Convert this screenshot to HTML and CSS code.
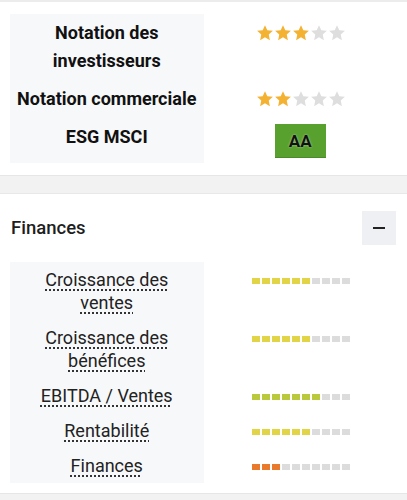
FILE: index.html
```html
<!DOCTYPE html>
<html lang="fr">
<head>
<meta charset="utf-8">
<link rel="stylesheet" href="styles.css">
</head>
<body>
<div class="topline"></div>
<section class="card card-ratings">
  <div class="grid grid-bold">
    <div class="label">Notation des investisseurs</div>
    <div class="value"><div class="stars">
      <svg class="star on" viewBox="0 0 24 24"><polygon points="12,1.5 15.1,8.3 22.5,9.1 17,14.1 18.5,21.5 12,17.8 5.5,21.5 7,14.1 1.5,9.1 8.9,8.3"/></svg>
      <svg class="star on" viewBox="0 0 24 24"><polygon points="12,1.5 15.1,8.3 22.5,9.1 17,14.1 18.5,21.5 12,17.8 5.5,21.5 7,14.1 1.5,9.1 8.9,8.3"/></svg>
      <svg class="star on" viewBox="0 0 24 24"><polygon points="12,1.5 15.1,8.3 22.5,9.1 17,14.1 18.5,21.5 12,17.8 5.5,21.5 7,14.1 1.5,9.1 8.9,8.3"/></svg>
      <svg class="star" viewBox="0 0 24 24"><polygon points="12,1.5 15.1,8.3 22.5,9.1 17,14.1 18.5,21.5 12,17.8 5.5,21.5 7,14.1 1.5,9.1 8.9,8.3"/></svg>
      <svg class="star" viewBox="0 0 24 24"><polygon points="12,1.5 15.1,8.3 22.5,9.1 17,14.1 18.5,21.5 12,17.8 5.5,21.5 7,14.1 1.5,9.1 8.9,8.3"/></svg>
    </div></div>
    <div class="label">Notation commerciale</div>
    <div class="value"><div class="stars">
      <svg class="star on" viewBox="0 0 24 24"><polygon points="12,1.5 15.1,8.3 22.5,9.1 17,14.1 18.5,21.5 12,17.8 5.5,21.5 7,14.1 1.5,9.1 8.9,8.3"/></svg>
      <svg class="star on" viewBox="0 0 24 24"><polygon points="12,1.5 15.1,8.3 22.5,9.1 17,14.1 18.5,21.5 12,17.8 5.5,21.5 7,14.1 1.5,9.1 8.9,8.3"/></svg>
      <svg class="star" viewBox="0 0 24 24"><polygon points="12,1.5 15.1,8.3 22.5,9.1 17,14.1 18.5,21.5 12,17.8 5.5,21.5 7,14.1 1.5,9.1 8.9,8.3"/></svg>
      <svg class="star" viewBox="0 0 24 24"><polygon points="12,1.5 15.1,8.3 22.5,9.1 17,14.1 18.5,21.5 12,17.8 5.5,21.5 7,14.1 1.5,9.1 8.9,8.3"/></svg>
      <svg class="star" viewBox="0 0 24 24"><polygon points="12,1.5 15.1,8.3 22.5,9.1 17,14.1 18.5,21.5 12,17.8 5.5,21.5 7,14.1 1.5,9.1 8.9,8.3"/></svg>
    </div></div>
    <div class="label">ESG MSCI</div>
    <div class="value"><span class="badge">AA</span></div>
  </div>
</section>
<div class="band"></div>
<section class="card card-fin">
  <div class="head">
    <h2 class="title">Finances</h2>
    <button class="toggle" aria-label="Réduire"><span class="minus"></span></button>
  </div>
  <div class="grid grid-reg">
    <div class="label"><span class="dotted">Croissance des ventes</span></div>
    <div class="value"><div class="bar y"><i class="f"></i><i class="f"></i><i class="f"></i><i class="f"></i><i class="f"></i><i class="f"></i><i></i><i></i><i></i><i></i></div></div>
    <div class="label"><span class="dotted">Croissance des bénéfices</span></div>
    <div class="value"><div class="bar y"><i class="f"></i><i class="f"></i><i class="f"></i><i class="f"></i><i class="f"></i><i class="f"></i><i></i><i></i><i></i><i></i></div></div>
    <div class="label"><span class="dotted">EBITDA / Ventes</span></div>
    <div class="value"><div class="bar g"><i class="f"></i><i class="f"></i><i class="f"></i><i class="f"></i><i class="f"></i><i class="f"></i><i class="f"></i><i></i><i></i><i></i></div></div>
    <div class="label"><span class="dotted">Rentabilité</span></div>
    <div class="value"><div class="bar y"><i class="f"></i><i class="f"></i><i class="f"></i><i class="f"></i><i class="f"></i><i class="f"></i><i></i><i></i><i></i><i></i></div></div>
    <div class="label"><span class="dotted">Finances</span></div>
    <div class="value"><div class="bar o"><i class="f"></i><i class="f"></i><i class="f"></i><i></i><i></i><i></i><i></i><i></i><i></i><i></i></div></div>
  </div>
</section>
<div class="band band-bottom"></div>
</body>
</html>
```

FILE: styles.css
```css
* { box-sizing: border-box; }
html, body { margin: 0; padding: 0; background: #fff; }
body { font-family: Roboto, "Liberation Sans", sans-serif; color: #1e1e1e; width: 407px; }

.topline { height: 2px; background: #ececec; }

.card { background: #fff; padding: 12px 10px; }
.card-fin { padding: 17px 10px 10px; }

.band { height: 19px; background: #f2f2f2; border-top: 1px solid #e6e6e6; border-bottom: 1px solid #e8e8e8; }
.band-bottom { height: 10px; border-bottom: 0; }

.grid { display: grid; grid-template-columns: 1fr 1fr; }
.label { background: #f7f8fa; text-align: center; }
.value { display: flex; justify-content: center; align-items: flex-start; }

.grid-bold .label { font-weight: 700; font-size: 18px; line-height: 28px; padding: 5px 4px; color: #111; }
.grid-bold .value { padding: 5px 0; }

.stars { display: flex; gap: 0; height: 28px; align-items: center; padding-left: 2px; }
.star { width: 18px; height: 18px; fill: #dedede; }
.star.on { fill: #f4b232; }

.badge { display: block; width: 51px; height: 34px; margin-top: 1px; background: #58a12f; border-bottom: 1px solid #4a8a28; color: #111; font-weight: 700; font-size: 17px; line-height: 34px; text-align: center; text-shadow: 0 0 2px rgba(255,255,255,0.6); }

.head { display: flex; justify-content: space-between; align-items: center; padding-bottom: 17px; }
.title { margin: 0; font-size: 18.5px; font-weight: 500; color: #1e1e1e; padding-left: 1px; }
.toggle { width: 34px; height: 34px; border: 0; padding: 0; margin-right: 1px; background: #eef0f3; display: flex; align-items: center; justify-content: center; }
.minus { display: block; width: 12px; height: 2px; background: #222; }

.grid-reg .label { font-size: 18px; line-height: 23px; padding: 6px 20px; color: #222; }
.grid-reg .value { padding: 6px 0; }
.dotted { text-decoration: underline dotted #333; text-decoration-thickness: 1.5px; text-underline-offset: 3px; }

.bar { display: flex; gap: 2px; height: 23px; align-items: center; padding-top: 2px; padding-left: 2px; }
.bar i { display: block; width: 8px; height: 6px; background: #dcdcdc; }
.bar.y i.f { background: #e2d447; }
.bar.g i.f { background: #b9c93b; }
.bar.o i.f { background: #e97a2c; }
```
